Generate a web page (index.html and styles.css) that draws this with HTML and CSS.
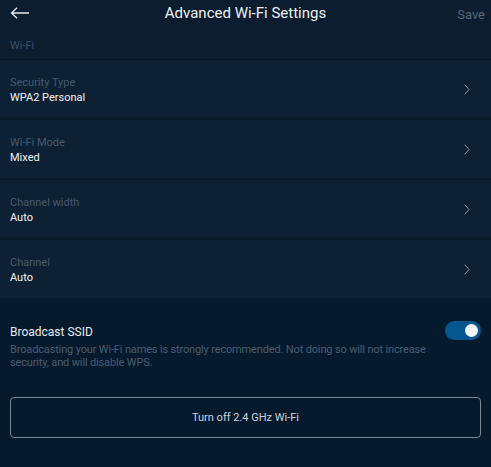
FILE: index.html
```html
<!DOCTYPE html>
<html>
<head>
<meta charset="utf-8">
<link rel="stylesheet" href="styles.css">
</head>
<body>
<div class="page">
  <header class="topbar">
    <svg class="back" width="20" height="12" viewBox="0 0 20 12"><path d="M19 6H1.5M7 0.8L1.5 6L7 11.2" fill="none" stroke="#e6e9ee" stroke-width="1.3"/></svg>
    <h1 class="title">Advanced Wi-Fi Settings</h1>
    <span class="save">Save</span>
  </header>
  <div class="section-label">Wi-Fi</div>
  <div class="rows">
    <div class="row"><div class="row-text"><div class="label">Security Type</div><div class="value">WPA2 Personal</div></div><svg class="chev" width="6" height="11" viewBox="0 0 6 11"><path d="M0.7 0.7L5 5.5L0.7 10.3" fill="none" stroke="#8c97a4" stroke-width="1"/></svg></div>
    <div class="row"><div class="row-text"><div class="label">Wi-Fi Mode</div><div class="value">Mixed</div></div><svg class="chev" width="6" height="11" viewBox="0 0 6 11"><path d="M0.7 0.7L5 5.5L0.7 10.3" fill="none" stroke="#8c97a4" stroke-width="1"/></svg></div>
    <div class="row"><div class="row-text"><div class="label">Channel width</div><div class="value">Auto</div></div><svg class="chev" width="6" height="11" viewBox="0 0 6 11"><path d="M0.7 0.7L5 5.5L0.7 10.3" fill="none" stroke="#8c97a4" stroke-width="1"/></svg></div>
    <div class="row"><div class="row-text"><div class="label">Channel</div><div class="value">Auto</div></div><svg class="chev" width="6" height="11" viewBox="0 0 6 11"><path d="M0.7 0.7L5 5.5L0.7 10.3" fill="none" stroke="#8c97a4" stroke-width="1"/></svg></div>
  </div>
  <div class="bottom">
    <div class="ssid">
      <div class="ssid-text">
        <div class="ssid-title">Broadcast SSID</div>
        <div class="ssid-desc">Broadcasting your Wi-Fi names is strongly recommended. Not doing so will not increase security, and will disable WPS.</div>
      </div>
      <div class="toggle"><div class="knob"></div></div>
    </div>
    <button class="btn">Turn off 2.4 GHz Wi-Fi</button>
  </div>
</div>
</body>
</html>
```
FILE: styles.css
```css
html, body { margin: 0; padding: 0; }
body {
  background: #061a2d;
  font-family: Roboto, "Liberation Sans", sans-serif;
  width: 491px;
  height: 467px;
  overflow: hidden;
}
.page { display: flex; flex-direction: column; }
.topbar {
  height: 28px;
  background: #0b1d2e;
  position: relative;
  display: flex;
  align-items: center;
  justify-content: space-between;
  padding: 0 6px 0 10px;
}
.back { display: block; margin-top: -2px; }
.title {
  position: absolute;
  left: 0; right: 0; top: 4px;
  margin: 0;
  text-align: center;
  font-size: 15px;
  font-weight: 400;
  color: #eef1f4;
  pointer-events: none;
}
.save { color: #56657a; font-size: 13px; margin-top: 1px; }
.section-label {
  height: 32px;
  background: #0b1d2e;
  box-sizing: border-box;
  padding: 11px 0 0 10px;
  font-size: 11px;
  color: #3d4f62;
  border-bottom: 1px solid #091827;
}
.rows { display: flex; flex-direction: column; }
.row {
  height: 60px;
  box-sizing: border-box;
  background: #0e2134;
  border-bottom: 2px solid #0a1a2a;
  display: flex;
  align-items: center;
  justify-content: space-between;
  padding: 0 21px 0 10px;
}
.row:last-child { border-bottom: 0; height: 58px; }
.row-text { display: flex; flex-direction: column; gap: 1px; margin-top: 2px; }
.label { font-size: 11px; color: #46586b; line-height: 14px; }
.value { font-size: 11px; color: #f0f2f5; line-height: 14px; }
.chev { display: block; }
.bottom {
  background: #061a2d;
  padding: 23px 10px 0 10px;
  display: flex;
  flex-direction: column;
}
.ssid { display: flex; justify-content: space-between; align-items: flex-start; }
.ssid-text { width: 432px; }
.ssid-title { font-size: 12px; color: #e8ebef; line-height: 14px; margin-top: 4px; }
.ssid-desc { font-size: 11px; color: #4a5c6f; line-height: 13px; margin-top: 4px; letter-spacing: -0.15px; }
.toggle {
  flex: none;
  width: 36px; height: 19px;
  border-radius: 10px;
  background: #04588f;
  position: relative;
}
.knob {
  position: absolute;
  right: 3px; top: 3px;
  width: 13px; height: 13px;
  border-radius: 50%;
  background: #f4f5f7;
}
.btn {
  margin-top: 28px;
  height: 41px;
  background: transparent;
  border: 1px solid #7d8896;
  border-radius: 4px;
  color: #cfd4da;
  font-family: Roboto, "Liberation Sans", sans-serif;
  font-size: 11px;
}
```
